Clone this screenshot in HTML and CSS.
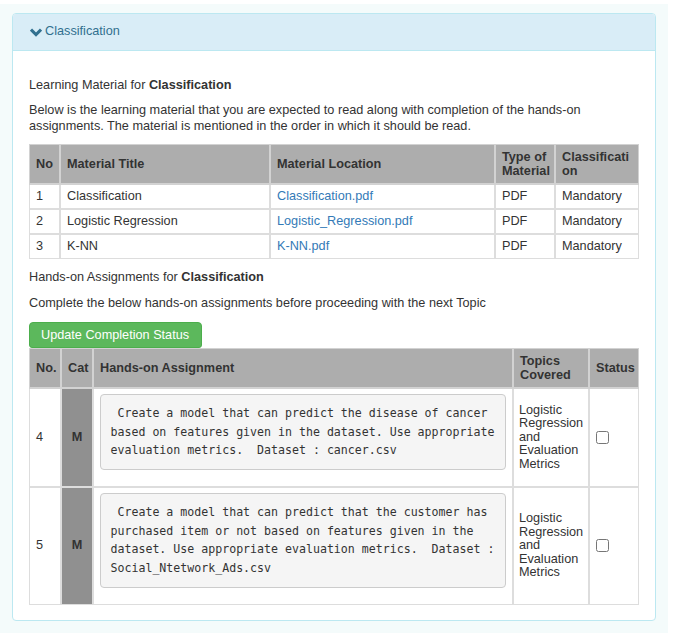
FILE: index.html
```html
<!DOCTYPE html>
<html>
<head>
<meta charset="utf-8">
<link rel="stylesheet" href="styles.css">
</head>
<body>
<div class="page">
  <div class="panel">
    <div class="panel-heading">
      <svg class="chev" width="12" height="9" viewBox="0 0 12 9"><polyline points="1,1.6 6,6.6 11,1.6" fill="none" stroke="#31708f" stroke-width="3" stroke-linecap="butt"/></svg>
      <span>Classification</span>
    </div>
    <div class="panel-body">
      <p class="title">Learning Material for <b>Classification</b></p>
      <p class="desc">Below is the learning material that you are expected to read along with completion of the hands-on assignments. The material is mentioned in the order in which it should be read.</p>
      <table class="grid mat">
        <colgroup><col style="width:31px"><col style="width:210px"><col style="width:225px"><col style="width:60px"><col></colgroup>
        <thead>
          <tr><th>No</th><th>Material Title</th><th>Material Location</th><th>Type of Material</th><th class="brk">Classification</th></tr>
        </thead>
        <tbody>
          <tr><td>1</td><td>Classification</td><td><a href="#">Classification.pdf</a></td><td>PDF</td><td>Mandatory</td></tr>
          <tr><td>2</td><td>Logistic Regression</td><td><a href="#">Logistic_Regression.pdf</a></td><td>PDF</td><td>Mandatory</td></tr>
          <tr><td>3</td><td>K-NN</td><td><a href="#">K-NN.pdf</a></td><td>PDF</td><td>Mandatory</td></tr>
        </tbody>
      </table>
      <p class="title t2">Hands-on Assignments for <b>Classification</b></p>
      <p class="desc d2">Complete the below hands-on assignments before proceeding with the next Topic</p>
      <button class="btn">Update Completion Status</button>
      <table class="grid hands">
        <colgroup><col style="width:32px"><col style="width:32px"><col style="width:420px"><col style="width:76px"><col></colgroup>
        <thead>
          <tr><th>No.</th><th>Cat</th><th>Hands-on Assignment</th><th>Topics Covered</th><th>Status</th></tr>
        </thead>
        <tbody>
          <tr>
            <td>4</td>
            <td class="cat">M</td>
            <td class="task"><pre> Create a model that can predict the disease of cancer
based on features given in the dataset. Use appropriate
evaluation metrics.  Dataset : cancer.csv</pre></td>
            <td class="topics">Logistic Regression and Evaluation Metrics</td>
            <td class="status"><input type="checkbox"></td>
          </tr>
          <tr>
            <td>5</td>
            <td class="cat">M</td>
            <td class="task"><pre> Create a model that can predict that the customer has
purchased item or not based on features given in the
dataset. Use appropriate evaluation metrics.  Dataset :
Social_Ntetwork_Ads.csv</pre></td>
            <td class="topics">Logistic Regression and Evaluation Metrics</td>
            <td class="status"><input type="checkbox"></td>
          </tr>
        </tbody>
      </table>
    </div>
  </div>
</div>
</body>
</html>
```

FILE: styles.css
```css
html, body {
  margin: 0;
  padding: 0;
  background: #ffffff;
}
body {
  font-family: "Liberation Sans", Arial, sans-serif;
  font-size: 12.7px;
  color: #333333;
}
.page {
  margin: 4px 5px 4px 0;
  padding: 9px 12px 12px 12px;
  background: #f4fbfb;
}
.panel {
  border: 1px solid #bce8f1;
  border-radius: 4px;
  background: #ffffff;
}
.panel-heading {
  background: #d9edf7;
  color: #31708f;
  border-bottom: 1px solid #bce8f1;
  border-radius: 3px 3px 0 0;
  padding: 8px 16px 9px 17px;
  line-height: 19px;
  font-size: 12.7px;
  display: flex;
  align-items: center;
  gap: 3px;
}
.chev {
  display: block;
  margin-top: 1px;
}
.panel-body {
  padding: 26px 16px 15px 16px;
}
p {
  margin: 0;
  line-height: 16px;
}
.title {
  margin-bottom: 9px;
}
.desc {
  margin-bottom: 10px;
}
.t2 {
  margin-top: 1px;
  margin-bottom: 10px;
}
.d2 {
  margin-bottom: 11px;
}
.mat {
  margin-bottom: 10px;
}
b {
  font-weight: bold;
  color: #333;
}
.grid {
  width: 100%;
  table-layout: fixed;
  border-collapse: separate;
  border-spacing: 0;
}
.grid th, .grid td {
  border: 1px solid #dddddd;
  border-width: 0 1px 1px 0;
  text-align: left;
}
.grid tr > :first-child {
  border-left-width: 1px;
}
.grid thead th {
  border-top-width: 1px;
  background: #adadad;
  font-weight: bold;
  line-height: 13.5px;
  padding: 6px 5px 5px 6px;
  vertical-align: middle;
  border-color: #d2d2d2;
  border-bottom-width: 2px;
}
.grid thead th + th {
  border-left: 1px solid #d2d2d2;
}
.grid td {
  padding: 3px 5px 3px 6px;
  line-height: 17px;
  vertical-align: middle;
  border-bottom-width: 2px;
}
.grid td + td {
  border-left: 1px solid #dddddd;
}
.grid tbody tr:last-child td {
  border-bottom-width: 1px;
}
.brk {
  word-break: break-all;
}
a {
  color: #337ab7;
  text-decoration: none;
}
.btn {
  display: block;
  box-sizing: border-box;
  white-space: nowrap;
  font-family: "Liberation Sans", Arial, sans-serif;
  font-size: 12.7px;
  line-height: 18px;
  height: 26px;
  color: #ffffff;
  background: #5cb85c;
  border: 1px solid #4cae4c;
  border-radius: 4px 4px 3px 3px;
  padding: 3px 11px;
  width: 173px;
  text-align: left;
  cursor: pointer;
}
.hands td.cat {
  background: #909090;
  font-weight: bold;
  text-align: center;
  padding-left: 3px;
  padding-right: 3px;
}
.hands td.task {
  padding: 5px 6px 16px 6px;
  vertical-align: top;
}
pre {
  margin: 0;
  padding: 9px 9.5px 9.5px 9.5px;
  background: #f5f5f5;
  border: 1px solid #cccccc;
  border-radius: 4px;
  font-family: "DejaVu Sans Mono", "Liberation Mono", monospace;
  font-size: 11.6px;
  line-height: 18.5px;
  color: #333333;
  white-space: pre;
  overflow: hidden;
}
.hands td.topics {
  line-height: 13.5px;
  padding: 3px 5px 3px 5px;
}
.hands td.status {
  padding: 3px 5px;
}
.status input {
  margin: 0 0 0 1px;
  width: 13px;
  height: 13px;
  vertical-align: middle;
  display: block;
}
```
